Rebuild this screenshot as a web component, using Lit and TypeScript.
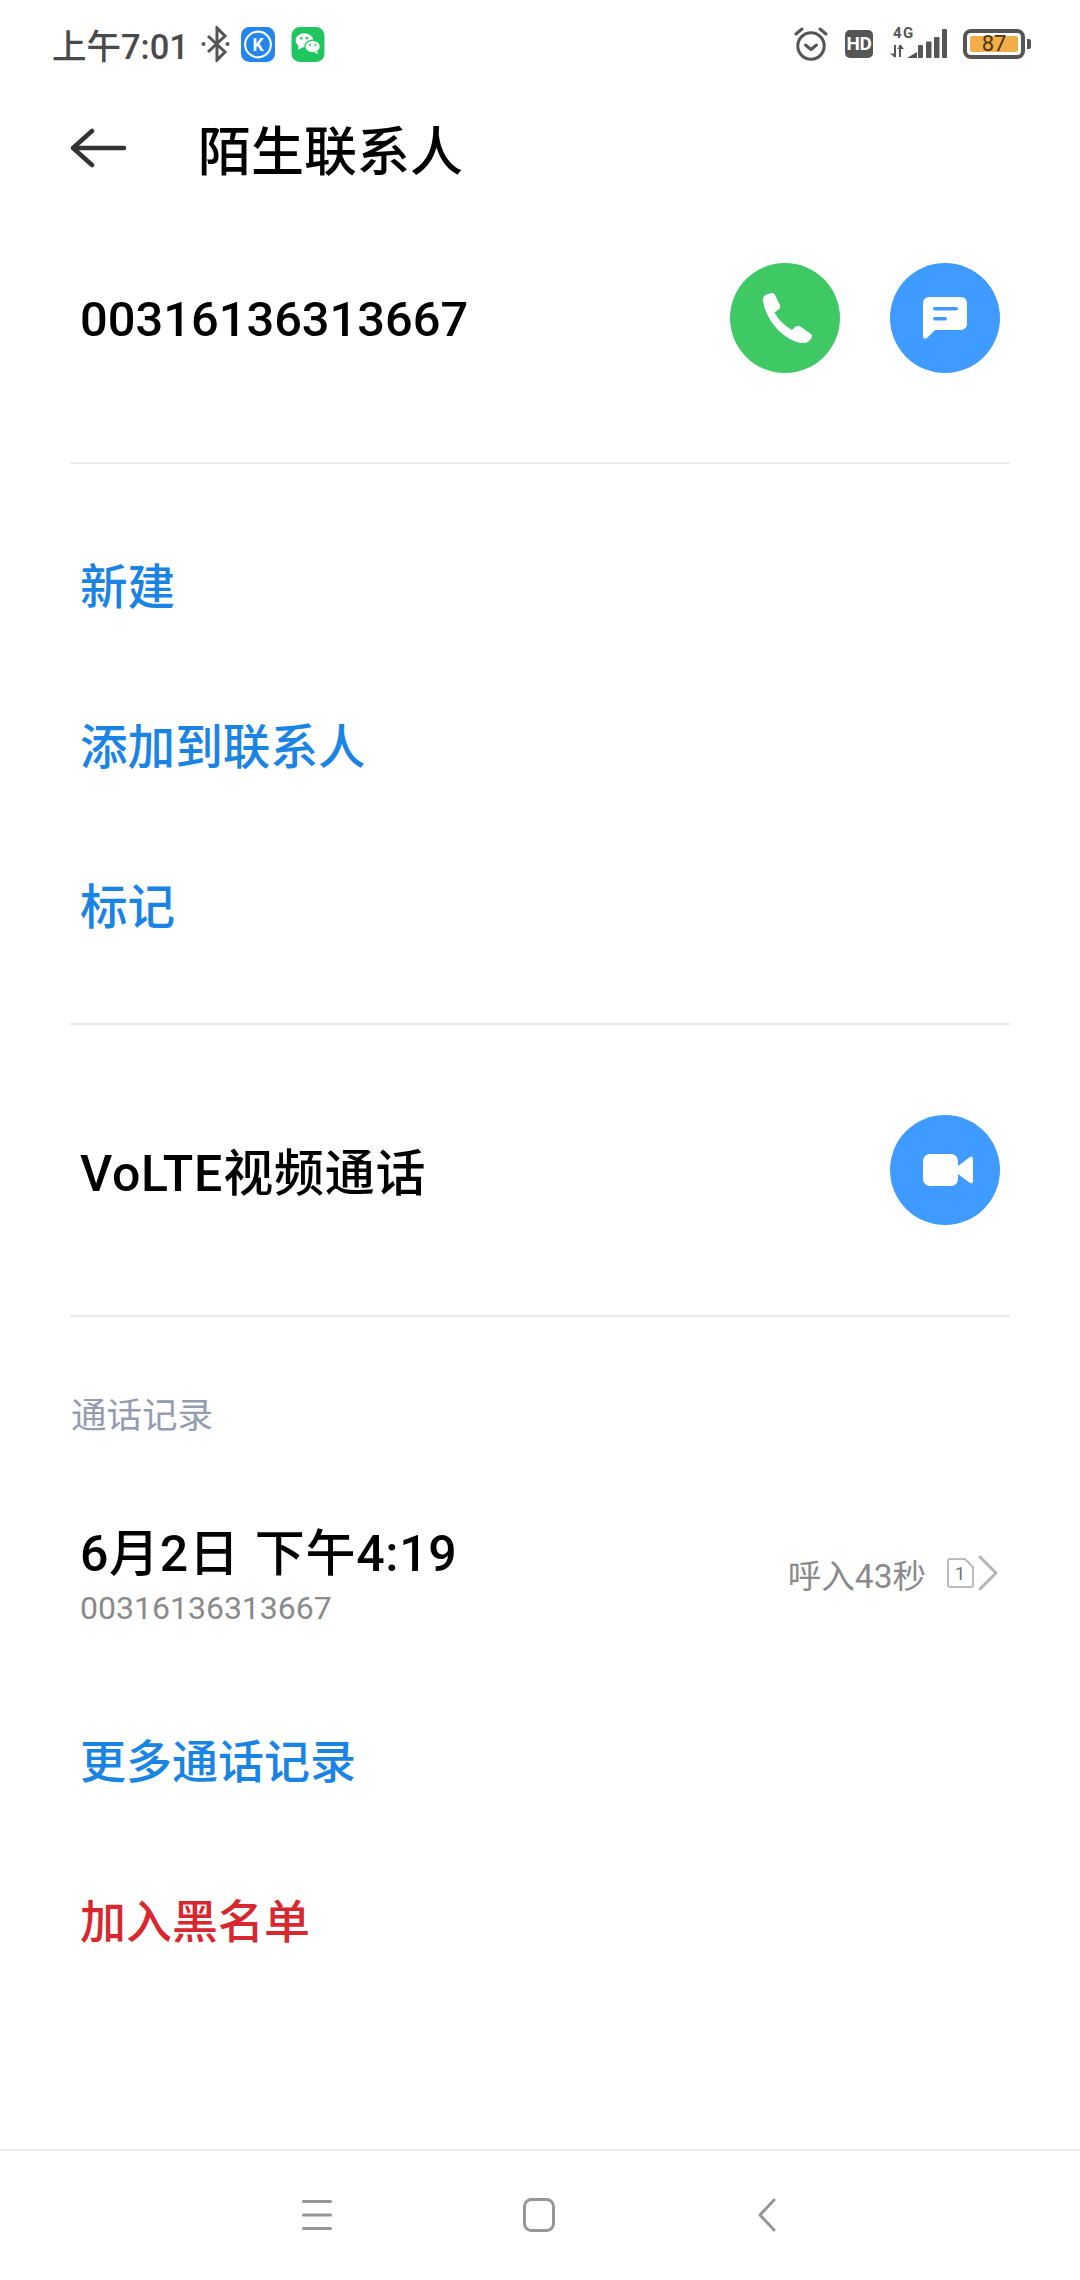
import { LitElement, html, css } from 'lit';
import { customElement } from 'lit/decorators.js';

// one line of blue action text
const actions = ['新建', '添加到联系人', '标记'];

@customElement('app-root')
export class AppRoot extends LitElement {
  static styles = css`
    :host {
      display: flex;
      flex-direction: column;
      width: 1080px;
      height: 2280px;
      background: #fff;
      color: #000;
      font-family: Roboto, "Noto Sans CJK SC", sans-serif;
      overflow: hidden;
    }
    svg { display: block; flex: none; }

    /* status bar */
    .status {
      height: 88px;
      display: flex;
      align-items: center;
      padding: 0 49px 0 52px;
      color: #4a4a4a;
    }
    .time { font-size: 34.5px; font-weight: 500; width: 149px; white-space: nowrap; }
    .status-left { display: flex; align-items: center; }
    .status-right { margin-left: auto; display: flex; align-items: center; }
    .app-icon { margin-left: 11px; }
    .app-icon.wechat { margin-left: 16px; }
    .hd {
      width: 28px; height: 28px; margin-left: 17px;
      background: #555; color: #fff; border-radius: 5px;
      font-size: 19px; font-weight: 700; line-height: 28px; text-align: center;
      letter-spacing: -0.5px;
    }
    .signal { margin-left: 17px; }
    .battery {
      margin-left: 16px;
      width: 62px; height: 30px;
      box-sizing: border-box;
      border: 4px solid #555;
      border-radius: 8px;
      padding: 3px;
      display: flex;
    }
    .battery span {
      flex: 1;
      background: #f0ad48;
      border-radius: 2px;
      color: #4a3410;
      font-size: 22px;
      line-height: 16px;
      text-align: center;
    }
    .battery-tip { width: 4px; height: 10px; margin-left: 2px; background: #555; border-radius: 0 2px 2px 0; }

    /* header */
    .header { height: 120px; display: flex; align-items: center; padding-left: 70px; }
    .title { margin-left: 71px; font-size: 53px; font-weight: 500; color: #000; }

    .section { margin: 0 70px; border-bottom: 2px solid #e9e9e9; box-sizing: content-box; }
    .row { display: flex; align-items: center; padding: 0 10px; }
    .number-row { height: 220px; margin-bottom: 34px; }
    .number { font-size: 48.8px; font-weight: 500; padding-top: 2px; }
    .buttons { margin-left: auto; display: flex; gap: 50px; }
    .round {
      width: 110px; height: 110px; border-radius: 50%;
      display: flex; align-items: center; justify-content: center;
      background: #3f9bff;
    }
    .round.green { background: #3ec964; }
    .round svg.phone { margin-left: 4px; }
    .round svg.video { margin-left: 5px; }

    .actions { padding: 42px 0 37px; }
    .action {
      height: 160px; box-sizing: border-box; padding: 0 0 6px 10px;
      display: flex; align-items: center;
      font-size: 47.6px; font-weight: 500; color: #1a84e4;
    }

    .volte-row { height: 290px; }
    .volte { font-size: 50px; font-weight: 500; letter-spacing: 0.8px; padding-bottom: 2px; }

    .log-title { margin: 0 71px; height: 167px; padding-top: 71px; box-sizing: border-box; font-size: 35.5px; color: #949cb2; line-height: 56px; }
    .log { display: flex; align-items: center; padding: 0 82px 6px 80px; height: 194px; box-sizing: border-box; }
    .log-date { font-size: 50px; font-weight: 500; letter-spacing: 0.7px; word-spacing: 2px; line-height: 60px; white-space: pre; }
    .log-num { font-size: 32px; color: #8a8a8a; line-height: 48px; }
    .log-side { margin-left: auto; display: flex; align-items: center; color: #8a8a8a; font-size: 33.5px; margin-bottom: 10px; }
    .log-side svg.sim { margin-left: 21px; }
    .log-side svg.chev { margin-left: 4px; }

    .link { height: 160px; display: flex; align-items: center; padding-left: 80px; font-size: 46px; font-weight: 500; }
    .link.blue { color: #1a84e4; }
    .link.red { color: #d8282f; }

    /* bottom nav */
    .nav {
      margin-top: auto;
      height: 131px;
      box-sizing: border-box;
      border-top: 2px solid #ececec;
      display: flex;
      align-items: center;
      padding: 0 304px 2px 302px;
      justify-content: space-between;
    }
    .nav .home { margin-right: 12px; }
  `;

  render() {
    return html`
      <div class="status">
        <div class="status-left">
          <span class="time">上午7:01</span>
          <svg width="29" height="36" viewBox="0 0 29 36" fill="none" stroke="#555" stroke-width="3">
            <path d="M7 10l17 16-8 8V2l8 8L7 26" />
            <circle cx="2.500" cy="18" r="2" fill="#555" stroke="none" /><circle cx="26.500" cy="18" r="2" fill="#555" stroke="none" />
          </svg>
          <svg class="app-icon" width="34" height="35" viewBox="0 0 33 34">
            <rect width="33" height="34" rx="8" fill="#2486e8" />
            <circle cx="16.500" cy="17" r="12.500" fill="none" stroke="#fff" stroke-width="2" />
            <text x="16.500" y="23" text-anchor="middle" font-family="Roboto" font-weight="700" font-size="17" fill="#fff">K</text>
          </svg>
          <svg class="app-icon wechat" width="34" height="35" viewBox="0 0 32 34">
            <rect width="32" height="34" rx="8" fill="#1fc660" />
            <ellipse cx="12.500" cy="13" rx="8.500" ry="7" fill="#fff" />
            <path d="M7 18l-1 4 5-2z" fill="#fff" />
            <ellipse cx="20.500" cy="19" rx="7.500" ry="6.200" fill="#fff" stroke="#1fc660" stroke-width="1.200" />
            <path d="M25 23.500l1 3-4-2z" fill="#fff" />
            <circle cx="9.500" cy="11" r="1.200" fill="#1fc660" /><circle cx="15" cy="11" r="1.200" fill="#1fc660" />
            <circle cx="18" cy="17.500" r="1" fill="#1fc660" /><circle cx="23" cy="17.500" r="1" fill="#1fc660" />
          </svg>
        </div>
        <div class="status-right">
          <svg width="34" height="34" viewBox="0 0 34 34" fill="none" stroke="#555" stroke-width="3" stroke-linecap="round" stroke-linejoin="round">
            <circle cx="17" cy="19" r="13.200" />
            <path d="M11.500 18l5.500 4.500 5.500-4.500" />
            <path d="M2 7l6-5M32 7l-6-5" />
          </svg>
          <div class="hd">HD</div>
          <svg class="signal" width="57" height="44" viewBox="0 -8 57 44" fill="#555">
            <text x="3" y="8" font-family="Roboto" font-weight="700" font-size="15" letter-spacing="1.500">4G</text>
            <rect x="4" y="15" width="2" height="12" /><path d="M0 23l5 5v-4z" />
            <rect x="9" y="15" width="2" height="12" /><path d="M7 19l4-4 3 4z" />
            <path d="M17 28l10-6v6z" />
            <rect x="28" y="15" width="5" height="13" rx="1" />
            <rect x="36" y="11.500" width="5.500" height="16.500" rx="1" />
            <rect x="44" y="7" width="5.500" height="21" rx="1" />
            <rect x="52" y="-1" width="5" height="29" rx="1" />
          </svg>
          <div class="battery"><span>87</span></div>
          <div class="battery-tip"></div>
        </div>
      </div>

      <div class="header">
        <svg width="57" height="40" viewBox="0 0 57 40" fill="none" stroke="#333" stroke-width="4.500" stroke-linecap="round" stroke-linejoin="round">
          <path d="M22 3L3 20l19 17M3 20h51" />
        </svg>
        <div class="title">陌生联系人</div>
      </div>

      <div class="section">
        <div class="row number-row">
          <span class="number">00316136313667</span>
          <div class="buttons">
            <div class="round green">
              <svg class="phone" width="50" height="50" viewBox="0 0 50 50" fill="#fff">
                <path d="M1 8Q0 3 6 1L10 0Q12 0 13 2L18 12Q19 15 16 17L12.500 19.500Q18 30 30 37L33 34Q36 32 39 34L49 41Q51 43 49 46L47 48Q44 51 39 50C22 47 4 28 1 8Z" />
              </svg>
            </div>
            <div class="round">
              <svg width="44" height="42" viewBox="0 0 44 42">
                <path fill="#fff" d="M6 0h32a6 6 0 0 1 6 6v21a6 6 0 0 1-6 6H12L4 41Q0 43 0 39V6a6 6 0 0 1 6-6z" />
                <rect x="10" y="10" width="25" height="3.500" rx="1.750" fill="#3f9bff" />
                <rect x="10" y="20" width="14" height="3.500" rx="1.750" fill="#3f9bff" />
              </svg>
            </div>
          </div>
        </div>
      </div>

      <div class="section actions">
        ${actions.map((a) => html`<div class="action">${a}</div>`)}
      </div>

      <div class="section">
        <div class="row volte-row">
          <span class="volte">VoLTE视频通话</span>
          <div class="buttons">
            <div class="round">
              <svg class="video" width="50" height="32" viewBox="0 0 50 32" fill="#fff">
                <rect x="0" y="0" width="35" height="32" rx="7" />
                <path d="M35 12l12-9c1.500-1 3 0 3 2v22c0 2-1.500 3-3 2L35 20z" />
              </svg>
            </div>
          </div>
        </div>
      </div>

      <div class="log-title">通话记录</div>
      <div class="log">
        <div>
          <div class="log-date">6月2日 下午4:19</div>
          <div class="log-num">00316136313667</div>
        </div>
        <div class="log-side">
          <span>呼入43秒</span>
          <svg class="sim" width="27" height="30" viewBox="0 0 27 30" fill="none" stroke="#bbb" stroke-width="2" stroke-linejoin="round">
            <path d="M3 1h15l8 8v18a2 2 0 0 1-2 2H3a2 2 0 0 1-2-2V3a2 2 0 0 1 2-2z" />
            <text x="13" y="22" text-anchor="middle" font-family="Roboto" font-size="19" fill="#777" stroke="none">1</text>
          </svg>
          <svg class="chev" width="20" height="36" viewBox="0 0 20 36" fill="none" stroke="#b5b5b5" stroke-width="3" stroke-linecap="round" stroke-linejoin="round">
            <path d="M2 2l16 16L2 34" />
          </svg>
        </div>
      </div>

      <div class="link blue">更多通话记录</div>
      <div class="link red">加入黑名单</div>

      <div class="nav">
        <svg width="30" height="30" viewBox="0 0 30 30" fill="#969696">
          <rect y="0" width="30" height="3" rx="1.500" />
          <rect y="13.500" width="30" height="3" rx="1.500" />
          <rect y="27" width="30" height="3" rx="1.500" />
        </svg>
        <svg class="home" width="32" height="34" viewBox="0 0 32 34" fill="none" stroke="#969696" stroke-width="3">
          <rect x="1.500" y="1.500" width="29" height="31" rx="7" />
        </svg>
        <svg width="18" height="34" viewBox="0 0 18 34" fill="none" stroke="#969696" stroke-width="3" stroke-linecap="round" stroke-linejoin="round">
          <path d="M16 2L2 17l14 15" />
        </svg>
      </div>
    `;
  }
}
